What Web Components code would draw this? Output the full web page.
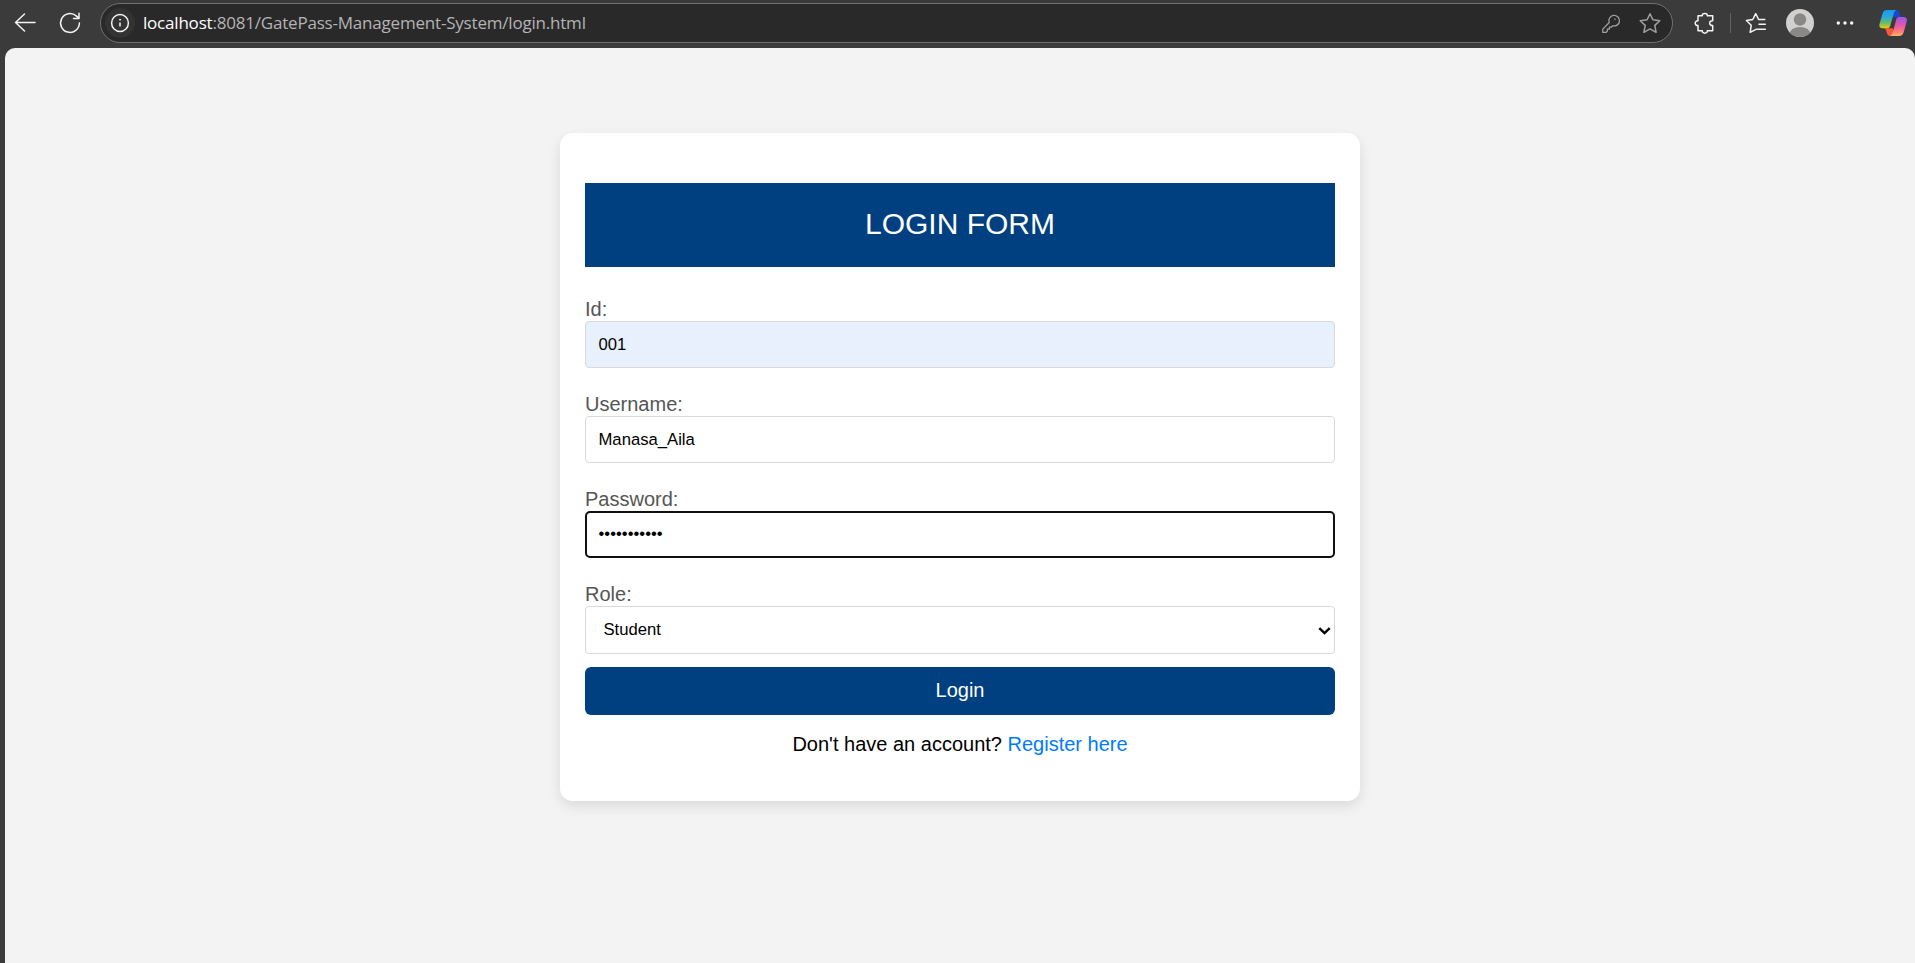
<!DOCTYPE html>
<html lang="en">
<head>
<meta charset="utf-8">
<title>Login</title>
<style>
html,body{margin:0;height:100%}
body{background:#3b3b3b;font-family:"Liberation Sans",Arial,sans-serif;overflow:hidden}
</style>
</head>
<body>
<browser-window></browser-window>

<template id="t-window">
<style>
:host{display:flex;flex-direction:column;height:963px;width:1915px;background:#3b3b3b}
main{flex:1;margin-left:5px;background:#f3f3f3;border-radius:10px 10px 0 0;display:flex;justify-content:center;align-items:flex-start;padding-top:85px;box-sizing:border-box}
</style>
<browser-toolbar></browser-toolbar>
<main>
<login-card>
<form-field label="Id:" kind="autofill">001</form-field>
<form-field label="Username:">Manasa_Aila</form-field>
<form-field label="Password:" kind="focused">•••••••••••</form-field>
<form-field label="Role:" kind="select">Student</form-field>
</login-card>
</main>
</template>

<template id="t-toolbar">
<style>
:host{display:flex;height:48px;align-items:flex-start;color:#f4f4f4;box-sizing:border-box}
svg{display:block;flex:none;fill:none;stroke:currentColor;stroke-width:1.5;stroke-linecap:round;stroke-linejoin:round}
.nav{display:flex;gap:21px;padding:11px 0 0 13px;width:100px;box-sizing:border-box}
.bar{box-sizing:border-box;width:1573px;height:40px;margin-top:3px;border:1px solid #707070;border-radius:20px;background:#292929;display:flex;align-items:center;padding:0 10px 0 4px}
.info{width:30px;height:30px;border-radius:50%;background:#333;display:flex;align-items:center;justify-content:center}
.url{flex:1;margin-left:8px;font:17px/24px "Open Sans","Noto Sans",sans-serif;color:#b4b4b4;white-space:nowrap;letter-spacing:-.2px}
.url b{font-weight:400;color:#fff}
.tools{display:flex;gap:16px;color:#a0a0a0}
.right{display:flex;align-items:center;height:46px;flex:1}
.sep{width:1px;height:20px;background:#626262;margin:0 13px 0 13px}
</style>
<div class="nav">
<svg width="24" height="24" viewBox="0 0 24 24"><path d="M22 11.5H2.5M11.5 3l-9 8.5 9 8.5"/></svg>
<svg width="24" height="24" viewBox="0 0 24 24"><path d="M21.4 12a9.4 9.4 0 1 1-3.2-7.1l2.4 2.2M21 2.2v5.3h-5.5"/></svg>
</div>
<div class="bar">
<div class="info"><svg width="20" height="20" viewBox="0 0 20 20"><circle cx="10" cy="10" r="8.4"/><path d="M10 9.4v4.2" stroke-linecap="butt"/><circle cx="10" cy="6.7" r=".5" fill="currentColor" stroke-width="1"/></svg></div>
<div class="url"><b>localhost</b>:8081/GatePass-Management-System/login.html</div>
<div class="tools">
<svg width="24" height="24" viewBox="0 0 24 24" style="stroke-width:1.3"><path d="M11.2 11.5a5.300 5.300 0 1 1 3.700 3.300l-1.500 1.400h-2v2H9.300v2l-1.400 1.200H4.800v-3.300z"/><circle cx="17" cy="8.300" r=".8" fill="currentColor" stroke="none"/></svg>
<svg width="24" height="24" viewBox="0 0 24 24"><path d="M12 2.700l2.900 6.100 6.900.9-5 4.700 1.300 6.900-6.100-3.400-6.100 3.400 1.300-6.900-5-4.700 6.900-.9z"/></svg>
</div>
</div>
<div class="right">
<svg style="margin-left:20px" width="24" height="24" viewBox="0 0 24 24"><path d="M5 4.700H9.300C9 1.600 14.600 1.600 14.300 4.700H19.700V9.800C15.700 9.400 15.700 14.900 19.700 14.500V19.700H14.300C14.600 23 9 23 9.300 19.700H5V14.500C1.300 14.900 1.300 9.500 5 9.800Z"/></svg>
<div class="sep"></div>
<svg width="24" height="24" viewBox="0 0 24 24"><path d="M12.500 18.200L6.200 21.300 7.200 14.200 2.400 9.500 8.800 8.500 11.700 2.700 14.600 8.500H20.800M15 13.300H21.300M13.500 18.200H21.300"/></svg>
<svg style="margin-left:17px;stroke:none" width="30" height="30" viewBox="0 0 30 30"><defs><clipPath id="round"><circle cx="15" cy="15" r="14"/></clipPath></defs><circle cx="15" cy="15" r="14" fill="#d2d0ce"/><g fill="#8a8886" clip-path="url(#round)"><circle cx="15" cy="11.500" r="6.200"/><ellipse cx="15" cy="26" rx="10.500" ry="7"/></g></svg>
<svg style="margin-left:18px;stroke:none;fill:#f5f5f5" width="24" height="24" viewBox="0 0 24 24"><circle cx="5.300" cy="12" r="1.700"/><circle cx="12" cy="12" r="1.700"/><circle cx="18.700" cy="12" r="1.700"/></svg>
<svg style="margin-left:21px;stroke:none" width="30" height="30" viewBox="0 0 30 30"><defs>
<linearGradient id="ca" x1="0" y1="0" x2="0" y2="1"><stop stop-color="#199af0"/><stop offset=".38" stop-color="#2aa8dd"/><stop offset=".7" stop-color="#65bc65"/><stop offset="1" stop-color="#efca10"/></linearGradient>
<linearGradient id="cb" x1="0" y1="0" x2="0" y2="1"><stop stop-color="#9d55ed"/><stop offset=".4" stop-color="#e055ad"/><stop offset=".75" stop-color="#ff787d"/><stop offset="1" stop-color="#ffb360"/></linearGradient></defs>
<path d="M13 2h5.300c2.200 0 2.900 1.500 3.700 4.200.5 1.800 1 2.900 2.500 2.900h-10z" fill="#1647cf"/>
<path d="M6 20.300h9L17 27.900h-4.900c-2 0-2.800-1.300-3.500-3.700-.5-2-.9-3.300-3-3.900z" fill="#f45a35"/>
<path d="M9.200 2h9.200c-1.700.6-2.300 2.200-3 4.700l-3.200 11c-.5 1.800-1.600 2.600-3.300 2.600H4.500c-2.600 0-3.700-1.700-3-4.300L4.600 5.400C5.300 3.200 6.700 2 9.200 2z" fill="url(#ca)"/>
<path d="M21.300 9.100h4.300c2.700 0 3.800 1.700 3.100 4.400l-3.100 11c-.7 2.300-2.100 3.400-4.500 3.400h-9c1.700-.6 2.300-2.100 3-4.700l3-11.300c.5-1.900 1.500-2.800 3.200-2.800z" fill="url(#cb)"/></svg>
</div>
</template>

<template id="t-card">
<style>
:host{display:flex;flex-direction:column;box-sizing:border-box;width:800px;height:668px;padding:50px 25px 0;background:#fff;border-radius:12.500px;box-shadow:0 5px 12.500px rgba(0,0,0,.1);font-size:20px;line-height:23px}
h1{margin:0 0 30px;height:84px;line-height:82px;background:#004080;color:#fff;text-align:center;font-size:30px;font-weight:400}
button{margin:0;border:0;height:48px;border-radius:6px;background:#004080;color:#fff;font:20px/23px "Liberation Sans",Arial,sans-serif;padding:0 0 2px}
p{margin:18px 0 0;text-align:center;color:#000}
a{color:#007bff;text-decoration:none}
</style>
<h1>LOGIN FORM</h1>
<slot></slot>
<button>Login</button>
<p>Don't have an account? <a href="#">Register here</a></p>
</template>

<template id="t-field">
<style>
:host{display:block;height:95px;color:#555}
:host([kind=select]){height:85px}
label{display:block;height:24px;line-height:24px}
.box{box-sizing:border-box;height:47px;border:1px solid #d9d9d9;border-radius:4px;background:#fff;color:#000;font-size:16.667px;line-height:44px;padding-left:12.500px;display:flex;align-items:center;justify-content:space-between}
:host([kind=autofill]) .box{background:#e8f0fe}
:host([kind=focused]) .box{border:2px solid #101010;padding-left:11.500px;padding-bottom:2px;line-height:41px;border-radius:5px}
:host([kind=select]) .box{height:48px;padding-left:17.500px;padding-right:3.500px;line-height:46px}
svg{display:none;fill:none;stroke:#000;stroke-width:2.400}
:host([kind=select]) svg{display:block;margin-top:2px}
</style>
<label></label>
<div class="box"><span><slot></slot></span><svg width="13" height="10" viewBox="0 0 13 10"><path d="M1.300 2.200l5.200 5 5.200-5"/></svg></div>
</template>

<script>
class TemplateElement extends HTMLElement {
  constructor() {
    super();
    this.attachShadow({mode: "open"}).append(
      document.importNode(document.getElementById(this.constructor.template).content, true));
  }
}
class FormField extends TemplateElement {
  static template = "t-field";
  connectedCallback() {
    this.shadowRoot.querySelector("label").textContent = this.getAttribute("label");
  }
}
class LoginCard extends TemplateElement { static template = "t-card"; }
class BrowserToolbar extends TemplateElement { static template = "t-toolbar"; }
class BrowserWindow extends TemplateElement { static template = "t-window"; }
customElements.define("form-field", FormField);
customElements.define("login-card", LoginCard);
customElements.define("browser-toolbar", BrowserToolbar);
customElements.define("browser-window", BrowserWindow);
</script>
</body>
</html>
